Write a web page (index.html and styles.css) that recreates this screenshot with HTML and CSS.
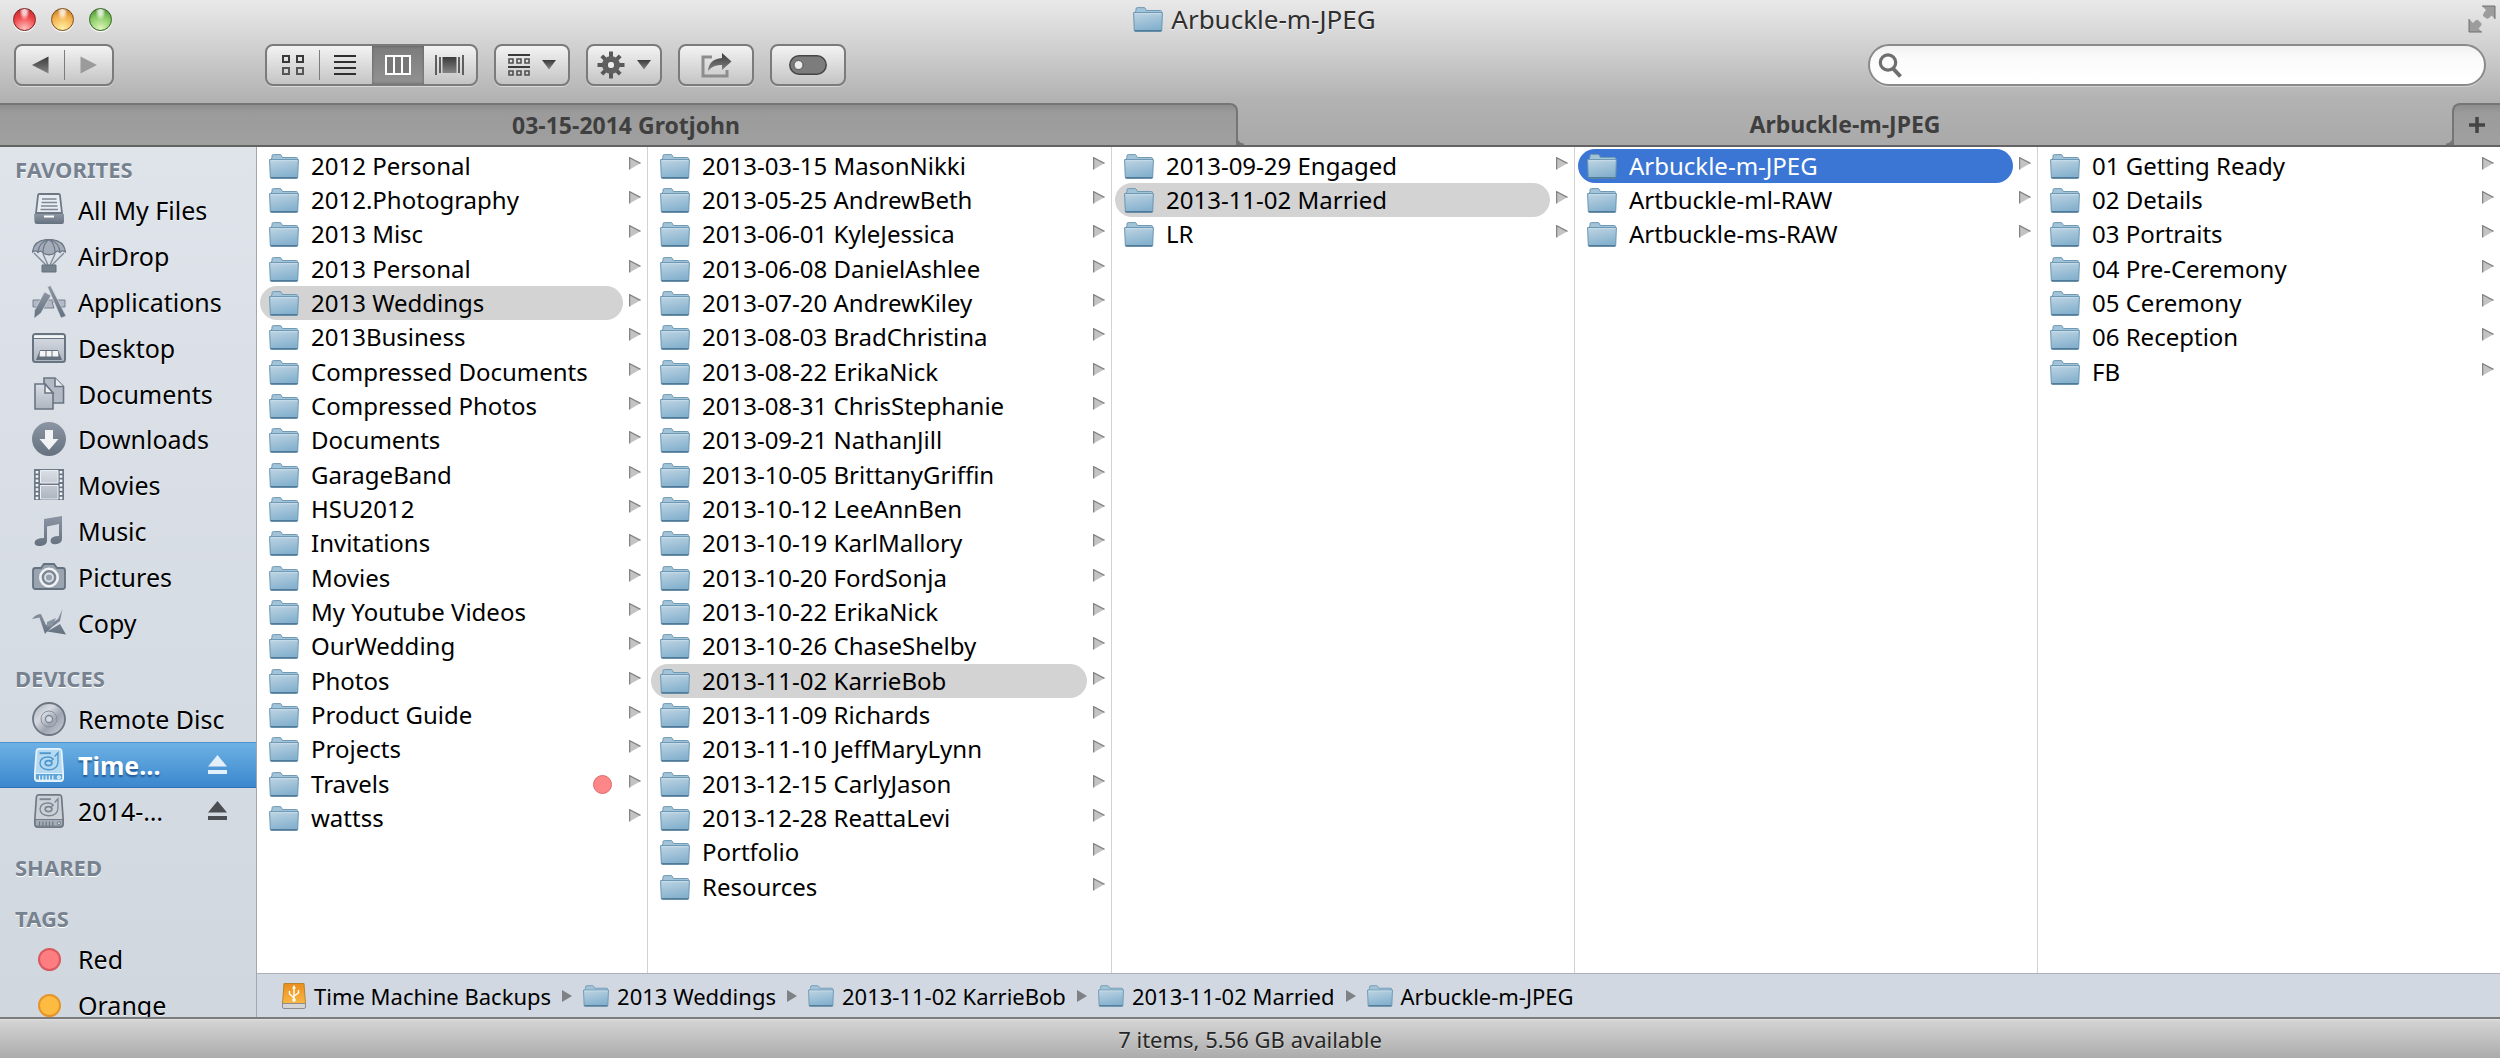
FILE: index.html
```html
<!DOCTYPE html>
<html lang="en">
<head>
<meta charset="utf-8">
<title>Arbuckle-m-JPEG</title>
<link rel="stylesheet" href="styles.css">
</head>
<body>
<svg class="defs" aria-hidden="true">
  <defs>
    <linearGradient id="g-folder" x1="0" y1="0" x2=".3" y2="1"><stop offset="0" stop-color="#bfd5e3"/><stop offset="1" stop-color="#85b1ce"/></linearGradient>
    <linearGradient id="g-side" x1="0" y1="0" x2="0" y2="1"><stop offset="0" stop-color="#8b95a3"/><stop offset="1" stop-color="#667180"/></linearGradient>
    <linearGradient id="g-pale" x1="0" y1="0" x2="0" y2="1"><stop offset="0" stop-color="#dadee5"/><stop offset="1" stop-color="#adb5c0"/></linearGradient>
    <linearGradient id="g-disc" x1="0" y1="0" x2="1" y2="1"><stop offset="0" stop-color="#a9b0bb"/><stop offset=".35" stop-color="#d6dae0"/><stop offset=".6" stop-color="#9ea6b2"/><stop offset="1" stop-color="#ced3da"/></linearGradient>
    <linearGradient id="g-tool" x1="0" y1="0" x2="0" y2="1"><stop offset="0" stop-color="#3a3a3a"/><stop offset="1" stop-color="#848484"/></linearGradient>
    <linearGradient id="g-usb" x1="0" y1="0" x2="0" y2="1"><stop offset="0" stop-color="#e98e1c"/><stop offset="1" stop-color="#fbb845"/></linearGradient>
    <symbol id="folder" viewBox="0 0 30 25">
      <path d="M1.5 8V5.5L3 4V2Q3 .6 4.400 .6H11Q12 .6 12.500 1.600L13.300 3.500H27.500Q28.500 3.500 28.500 4.500V8Z" fill="#a3c3d8" stroke="#6f9ab6" stroke-width="1"/>
      <path d="M.6 5.600H29.400L28.700 23.300Q28.600 24.300 27.600 24.300H2.400Q1.400 24.300 1.300 23.300Z" fill="url(#g-folder)" stroke="#6895b2" stroke-width="1"/>
      <path d="M1.500 23.800H28.500" stroke="#456f8c" stroke-width="1.200"/>
      <path d="M1.500 6.700H28.500" stroke="#d0e2ed" stroke-width=".8"/>
    </symbol>
    <symbol id="chev" viewBox="0 0 12 13"><path d="M.6 .6V12.400L11.500 6.300Z" fill="#c3c3c3"/><path d="M.6 12.600V.7L11.500 6.300" fill="none" stroke="#848484" stroke-width="1.300"/></symbol>
    <symbol id="crumb" viewBox="0 0 10 12"><path d="M0 0L10 6L0 12Z" fill="#7e8287"/></symbol>
    <symbol id="eject" viewBox="0 0 19 20"><path d="M9.500 0L19 11.500H0ZM0 15H19V19H0Z" fill="currentColor"/></symbol>
    <symbol id="hdd" viewBox="0 0 32 36">
      <path d="M5 1H27Q29 1 29.300 3L31 27V32Q31 35 28 35H4Q1 35 1 32V27L2.700 3Q3 1 5 1Z" fill="var(--a)" stroke="var(--b)" stroke-width="1.800"/>
      <path d="M1.500 27H30.500V32Q30.500 34 28 34H4Q1.500 34 1.500 32Z" fill="var(--c)" stroke="var(--b)" stroke-width="1"/>
      <path d="M6 5.500H18" stroke="var(--d)" stroke-width="2"/>
      <path d="M22 9L25.500 5V15Q25 23 15.500 23Q6.500 22.500 6.500 16Q7 9.500 15 9.500Q19 9.500 20.500 12L17 14.500" fill="none" stroke="var(--d)" stroke-width="1.400"/>
      <ellipse cx="15.500" cy="16" rx="3.600" ry="2.700" fill="none" stroke="var(--d)" stroke-width="1.800"/>
      <path d="M6 29V34M9.500 29V34M13 29V34M16.500 29V34M20 29V34" stroke="var(--b)" stroke-width="1.300"/>
      <circle cx="26.500" cy="31" r="1.700" fill="var(--a)" stroke="var(--b)"/>
    </symbol>
  </defs>
</svg>

<div class="window">
  <header class="chrome">
    <div class="titlebar">
      <div class="lights">
        <button class="light red" aria-label="Close"></button>
        <button class="light amber" aria-label="Minimize"></button>
        <button class="light green" aria-label="Zoom"></button>
      </div>
      <h1 class="title"><svg class="folder"><use href="#folder"/></svg>Arbuckle-m-JPEG</h1>
      <button class="full" aria-label="Full screen">
        <svg width="28" height="28" viewBox="0 0 28 28"><path d="M14 1H27V14L23.500 10.500Q20 14.500 18.500 13.500L15 11Q14.500 9 18 5Z M1 14V27H14L10.500 23.500Q14 20 13.500 18.500L10 15Q8.500 14 5 18Z" fill="#9c9c9c"/><path d="M14 1H27M1 14V27M27 1V14M1 27H14" stroke="#707070" stroke-width="1"/></svg>
      </button>
    </div>
    <div class="toolbar">
      <div class="group nav">
        <button aria-label="Back"><svg width="17" height="18" viewBox="0 0 17 18"><path d="M0 9L16.500 .5V17.500Z" fill="url(#g-tool)"/></svg></button>
        <button aria-label="Forward"><svg width="17" height="18" viewBox="0 0 17 18"><path d="M17 9L.5 .5V17.500Z" fill="#9b9b9b"/></svg></button>
      </div>
      <div class="group views">
        <button aria-label="Icons"><svg width="22" height="20" viewBox="0 0 22 20" fill="none" stroke="#3a3a3a" stroke-width="2"><path d="M1 1H7V7H1ZM15 1H21V7H15Z"/><path d="M1 13H7V19H1ZM15 13H21V19H15Z" stroke="#565656"/></svg></button>
        <button aria-label="List"><svg width="22" height="20" viewBox="0 0 22 20"><path d="M0 1H22M0 7H22M0 13H22M0 19H22" stroke="#2e2e2e" stroke-width="2"/></svg></button>
        <button class="on" aria-label="Columns" aria-pressed="true"><svg width="26" height="20" viewBox="0 0 26 20"><path d="M1 1H25V19H1ZM9 1V19M17 1V19" fill="#777" stroke="#fff" stroke-width="2"/></svg></button>
        <button aria-label="Cover Flow"><svg width="29" height="20" viewBox="0 0 29 20"><path d="M1 0V20M5 2V18M24 2V18M28 0V20" stroke="#3f3f3f" stroke-width="1.600"/><path d="M7.500 2H21.500V18H7.500Z" fill="url(#g-tool)"/></svg></button>
      </div>
      <button class="tool" aria-label="Arrange">
        <svg width="22" height="22" viewBox="0 0 22 22" fill="none" stroke="#3a3a3a" stroke-width="2"><path d="M0 1H22M0 13H22"/><path d="M1 5H5V9H1ZM9 5H13V9H9ZM17 5H21V9H17ZM1 17H5V21H1ZM9 17H13V21H9ZM17 17H21V21H17Z" stroke="#505050" stroke-width="1.600"/></svg>
        <svg width="14" height="10" viewBox="0 0 14 10"><path d="M0 0H14L7 9.500Z" fill="url(#g-tool)"/></svg>
      </button>
      <button class="tool" aria-label="Action">
        <svg width="28" height="28" viewBox="-14 -14 28 28"><g stroke="#585858" stroke-width="4"><path d="M0 -13.500V13.500M-13.500 0H13.500M-9.200 -9.200L9.200 9.200M-9.200 9.200L9.200 -9.200"/></g><circle r="9" fill="#606060"/><circle r="3.800" fill="#ececec" stroke="#4d4d4d"/></svg>
        <svg width="14" height="10" viewBox="0 0 14 10"><path d="M0 0H14L7 9.500Z" fill="url(#g-tool)"/></svg>
      </button>
      <button class="tool" aria-label="Share">
        <svg width="31" height="26" viewBox="0 0 31 26"><path d="M11 5H2V24H26V18" fill="none" stroke="#8d8d8d" stroke-width="3"/><path d="M7 19Q8 7 21 6V1L30.500 9.500L21 18V13Q12 12.500 7 19Z" fill="url(#g-tool)"/></svg>
      </button>
      <button class="tool" aria-label="Tags">
        <svg width="38" height="20" viewBox="0 0 38 20"><rect x=".8" y=".8" width="36.400" height="18.400" rx="9.200" fill="#7c7c7c" stroke="#454545" stroke-width="1.500"/><circle cx="9.500" cy="10" r="4.500" fill="#ececec" stroke="#555" stroke-width="1"/></svg>
      </button>
      <label class="search">
        <svg width="25" height="25" viewBox="0 0 25 25"><circle cx="10" cy="9.500" r="7.700" fill="none" stroke="#6e6e6e" stroke-width="3.200"/><path d="M15 15.500L22.500 23.500" stroke="#6e6e6e" stroke-width="4"/></svg>
        <input type="search" aria-label="Search">
      </label>
    </div>
    <nav class="tabs">
      <button class="tab back">03-15-2014 Grotjohn</button>
      <button class="tab">Arbuckle-m-JPEG</button>
      <button class="tab-new" aria-label="New tab"><svg width="16" height="16" viewBox="0 0 16 16"><path d="M8 0V16M0 8H16" stroke="#444" stroke-width="3.500"/></svg></button>
    </nav>
  </header>

  <div class="body">
    <aside class="sidebar">
      <section>
        <h2>FAVORITES</h2>
        <ul>
          <li><a href="#"><svg viewBox="0 0 34 34"><path d="M6 2.500Q6 1 7.500 1H26.500Q28 1 28 2.500L30 20H4Z" fill="#e9ecf0" stroke="#6d7886" stroke-width="1.800"/><path d="M10 6H24.500M9.500 9.500H25M9 13H25.500M8.500 16.500H26" stroke="#7d8795" stroke-width="1.400"/><path d="M2 21H32V28.500Q32 31 30 31H5Q2.500 31 2.500 28.500Z" fill="url(#g-side)"/><path d="M12 23.500H22" stroke="#fff" stroke-width="2"/></svg>All My Files</a></li>
          <li><a href="#"><svg viewBox="0 0 34 34"><path d="M.5 13Q2 .5 17 .5T33.500 13Q30 10.500 28 13.500Q25 10.500 23 14Q17 17.500 11 14Q9 10.500 6 13.500Q4 10.500 .5 13Z" fill="#a4adb9" stroke="#6d7886" stroke-width="1.300"/><path d="M11 14Q11 4 17 .5Q23 4 23 14M6 13Q7 4 15 1M28 13Q27 4 19 1" fill="none" stroke="#6d7886" stroke-width="1.300"/><path d="M2 14L14 26M11 15L16 26M23 15L18 26M32 14L20 26" stroke="#7b8593" stroke-width="1.300"/><path d="M10 26H24V33H10Z" fill="#77828f" stroke="#66717f"/></svg>AirDrop</a></li>
          <li><a href="#"><svg viewBox="0 0 34 34"><path d="M1 15H33V22H29L25 17H20L22 23H11L12 17L5 22H1Z" fill="#b3bac5" stroke="#74808d" stroke-width="1"/><path d="M12.500 7L19 10.500L9 28L2 33.500L2.500 25.500Z" fill="url(#g-side)" stroke="#dde2e8" stroke-width=".6"/><path d="M15.500 2L18.500 .5L34 31L29 33Z" fill="url(#g-side)" stroke="#dde2e8" stroke-width=".6"/></svg>Applications</a></li>
          <li><a href="#"><svg viewBox="0 0 34 34"><rect x="1" y="3" width="32" height="28" rx="2.500" fill="url(#g-pale)" stroke="#697482" stroke-width="2"/><path d="M2 4.500H32V7H2Z" fill="#f2f4f6"/><path d="M2 7.500H32" stroke="#697482"/><path d="M8 19H26L30 29H4Z" fill="#66717f"/><path d="M8 20H13.500V25.500H7.500ZM14.500 20H19.500V25.500H14.500ZM20.500 20H26L26.500 25.500H20.500Z" fill="#f4f5f7"/></svg>Desktop</a></li>
          <li><a href="#"><svg viewBox="0 0 34 34"><path d="M12 1H23L31.500 9.500V26H12Z" fill="#b3bac5" stroke="#697482" stroke-width="1.600"/><path d="M23 1V9.500H31.500" fill="#e8ebef" stroke="#697482" stroke-width="1.600"/><path d="M3 7H13L21 16V32H3Z" fill="url(#g-pale)" stroke="#697482" stroke-width="1.600"/><path d="M13 7V16H21Z" fill="#eff1f4" stroke="#697482" stroke-width="1.500"/></svg>Documents</a></li>
          <li><a href="#"><svg viewBox="0 0 34 34"><circle cx="17" cy="17" r="17" fill="url(#g-side)"/><path d="M13 8H21V17H26.500L17 28L7.500 17H13Z" fill="#f0f2f4"/></svg>Downloads</a></li>
          <li><a href="#"><svg viewBox="0 0 34 34"><path d="M2 1H32V32H2Z" fill="#6d7886"/><path d="M8.500 2.500H26V15H8.500ZM8.500 17.500H26V31H8.500Z" fill="url(#g-pale)" stroke="#eef0f3"/><path d="M5 3V32M29 3V32" stroke="#f2f4f6" stroke-width="2.600" stroke-dasharray="2.500 1.800"/></svg>Movies</a></li>
          <li><a href="#"><svg viewBox="0 0 34 34"><path d="M12 5L30 2V25Q30 29 25 30Q19 31 18.500 27Q18.500 22 27 22V10L15 12.500V27Q15 31 9 32Q2.500 32.500 2.500 28.500Q3 24 12 24Z" fill="url(#g-side)"/></svg>Music</a></li>
          <li><a href="#"><svg viewBox="0 0 34 34"><path d="M3.500 8H9L12 4H22L25 8H30.500Q33 8 33 10.500V26.500Q33 29 30.500 29H3.500Q1 29 1 26.500V10.500Q1 8 3.500 8Z" fill="#9aa4b0" stroke="#66717f" stroke-width="1.800"/><circle cx="17" cy="17.500" r="8.700" fill="#7c8795" stroke="#f0f2f4" stroke-width="2.600"/><circle cx="17" cy="17.500" r="4" fill="#99a3af" stroke="#dfe3e8" stroke-width="1.800"/></svg>Pictures</a></li>
          <li><a href="#"><svg viewBox="0 0 34 34"><path d="M0 13Q4 8 9 8L14 19L20 17L26 13L30.500 3L28 15L20 21L16 25L28 18L34 28.500L15 25.500L13 28L7.500 11.500Z" fill="url(#g-side)"/><path d="M15 16L24 12L20 20L15 21Z" fill="#8994a1"/></svg>Copy</a></li>
        </ul>
      </section>
      <section>
        <h2>DEVICES</h2>
        <ul>
          <li><a href="#"><svg viewBox="0 0 34 34"><circle cx="17" cy="17" r="16" fill="url(#g-disc)" stroke="#6b7683" stroke-width="1.800"/><circle cx="17" cy="17" r="8" fill="none" stroke="#88929f"/><circle cx="17" cy="17" r="3.500" fill="#d6dbe2" stroke="#7d8794" stroke-width="1.300"/></svg>Remote Disc</a></li>
          <li class="current"><a href="#"><svg class="drive lit"><use href="#hdd"/></svg>Time…</a><button class="eject" aria-label="Eject"><svg width="19" height="20"><use href="#eject"/></svg></button></li>
          <li><a href="#"><svg class="drive"><use href="#hdd"/></svg>2014-…</a><button class="eject" aria-label="Eject"><svg width="19" height="20"><use href="#eject"/></svg></button></li>
        </ul>
      </section>
      <section><h2>SHARED</h2></section>
      <section>
        <h2>TAGS</h2>
        <ul>
          <li><a href="#"><i class="dot r"></i>Red</a></li>
          <li><a href="#"><i class="dot o"></i>Orange</a></li>
        </ul>
      </section>
    </aside>

    <main class="main">
      <div class="columns">
        <ul class="col">
          <li><a href="#"><svg class="folder"><use href="#folder"/></svg>2012 Personal</a><svg class="chev"><use href="#chev"/></svg></li>
          <li><a href="#"><svg class="folder"><use href="#folder"/></svg>2012.Photography</a><svg class="chev"><use href="#chev"/></svg></li>
          <li><a href="#"><svg class="folder"><use href="#folder"/></svg>2013 Misc</a><svg class="chev"><use href="#chev"/></svg></li>
          <li><a href="#"><svg class="folder"><use href="#folder"/></svg>2013 Personal</a><svg class="chev"><use href="#chev"/></svg></li>
          <li><a class="open" href="#"><svg class="folder"><use href="#folder"/></svg>2013 Weddings</a><svg class="chev"><use href="#chev"/></svg></li>
          <li><a href="#"><svg class="folder"><use href="#folder"/></svg>2013Business</a><svg class="chev"><use href="#chev"/></svg></li>
          <li><a href="#"><svg class="folder"><use href="#folder"/></svg>Compressed Documents</a><svg class="chev"><use href="#chev"/></svg></li>
          <li><a href="#"><svg class="folder"><use href="#folder"/></svg>Compressed Photos</a><svg class="chev"><use href="#chev"/></svg></li>
          <li><a href="#"><svg class="folder"><use href="#folder"/></svg>Documents</a><svg class="chev"><use href="#chev"/></svg></li>
          <li><a href="#"><svg class="folder"><use href="#folder"/></svg>GarageBand</a><svg class="chev"><use href="#chev"/></svg></li>
          <li><a href="#"><svg class="folder"><use href="#folder"/></svg>HSU2012</a><svg class="chev"><use href="#chev"/></svg></li>
          <li><a href="#"><svg class="folder"><use href="#folder"/></svg>Invitations</a><svg class="chev"><use href="#chev"/></svg></li>
          <li><a href="#"><svg class="folder"><use href="#folder"/></svg>Movies</a><svg class="chev"><use href="#chev"/></svg></li>
          <li><a href="#"><svg class="folder"><use href="#folder"/></svg>My Youtube Videos</a><svg class="chev"><use href="#chev"/></svg></li>
          <li><a href="#"><svg class="folder"><use href="#folder"/></svg>OurWedding</a><svg class="chev"><use href="#chev"/></svg></li>
          <li><a href="#"><svg class="folder"><use href="#folder"/></svg>Photos</a><svg class="chev"><use href="#chev"/></svg></li>
          <li><a href="#"><svg class="folder"><use href="#folder"/></svg>Product Guide</a><svg class="chev"><use href="#chev"/></svg></li>
          <li><a href="#"><svg class="folder"><use href="#folder"/></svg>Projects</a><svg class="chev"><use href="#chev"/></svg></li>
          <li><a href="#"><svg class="folder"><use href="#folder"/></svg>Travels<i class="mark"></i></a><svg class="chev"><use href="#chev"/></svg></li>
          <li><a href="#"><svg class="folder"><use href="#folder"/></svg>wattss</a><svg class="chev"><use href="#chev"/></svg></li>
        </ul>
        <ul class="col">
          <li><a href="#"><svg class="folder"><use href="#folder"/></svg>2013-03-15 MasonNikki</a><svg class="chev"><use href="#chev"/></svg></li>
          <li><a href="#"><svg class="folder"><use href="#folder"/></svg>2013-05-25 AndrewBeth</a><svg class="chev"><use href="#chev"/></svg></li>
          <li><a href="#"><svg class="folder"><use href="#folder"/></svg>2013-06-01 KyleJessica</a><svg class="chev"><use href="#chev"/></svg></li>
          <li><a href="#"><svg class="folder"><use href="#folder"/></svg>2013-06-08 DanielAshlee</a><svg class="chev"><use href="#chev"/></svg></li>
          <li><a href="#"><svg class="folder"><use href="#folder"/></svg>2013-07-20 AndrewKiley</a><svg class="chev"><use href="#chev"/></svg></li>
          <li><a href="#"><svg class="folder"><use href="#folder"/></svg>2013-08-03 BradChristina</a><svg class="chev"><use href="#chev"/></svg></li>
          <li><a href="#"><svg class="folder"><use href="#folder"/></svg>2013-08-22 ErikaNick</a><svg class="chev"><use href="#chev"/></svg></li>
          <li><a href="#"><svg class="folder"><use href="#folder"/></svg>2013-08-31 ChrisStephanie</a><svg class="chev"><use href="#chev"/></svg></li>
          <li><a href="#"><svg class="folder"><use href="#folder"/></svg>2013-09-21 NathanJill</a><svg class="chev"><use href="#chev"/></svg></li>
          <li><a href="#"><svg class="folder"><use href="#folder"/></svg>2013-10-05 BrittanyGriffin</a><svg class="chev"><use href="#chev"/></svg></li>
          <li><a href="#"><svg class="folder"><use href="#folder"/></svg>2013-10-12 LeeAnnBen</a><svg class="chev"><use href="#chev"/></svg></li>
          <li><a href="#"><svg class="folder"><use href="#folder"/></svg>2013-10-19 KarlMallory</a><svg class="chev"><use href="#chev"/></svg></li>
          <li><a href="#"><svg class="folder"><use href="#folder"/></svg>2013-10-20 FordSonja</a><svg class="chev"><use href="#chev"/></svg></li>
          <li><a href="#"><svg class="folder"><use href="#folder"/></svg>2013-10-22 ErikaNick</a><svg class="chev"><use href="#chev"/></svg></li>
          <li><a href="#"><svg class="folder"><use href="#folder"/></svg>2013-10-26 ChaseShelby</a><svg class="chev"><use href="#chev"/></svg></li>
          <li><a class="open" href="#"><svg class="folder"><use href="#folder"/></svg>2013-11-02 KarrieBob</a><svg class="chev"><use href="#chev"/></svg></li>
          <li><a href="#"><svg class="folder"><use href="#folder"/></svg>2013-11-09 Richards</a><svg class="chev"><use href="#chev"/></svg></li>
          <li><a href="#"><svg class="folder"><use href="#folder"/></svg>2013-11-10 JeffMaryLynn</a><svg class="chev"><use href="#chev"/></svg></li>
          <li><a href="#"><svg class="folder"><use href="#folder"/></svg>2013-12-15 CarlyJason</a><svg class="chev"><use href="#chev"/></svg></li>
          <li><a href="#"><svg class="folder"><use href="#folder"/></svg>2013-12-28 ReattaLevi</a><svg class="chev"><use href="#chev"/></svg></li>
          <li><a href="#"><svg class="folder"><use href="#folder"/></svg>Portfolio</a><svg class="chev"><use href="#chev"/></svg></li>
          <li><a href="#"><svg class="folder"><use href="#folder"/></svg>Resources</a><svg class="chev"><use href="#chev"/></svg></li>
        </ul>
        <ul class="col">
          <li><a href="#"><svg class="folder"><use href="#folder"/></svg>2013-09-29 Engaged</a><svg class="chev"><use href="#chev"/></svg></li>
          <li><a class="open" href="#"><svg class="folder"><use href="#folder"/></svg>2013-11-02 Married</a><svg class="chev"><use href="#chev"/></svg></li>
          <li><a href="#"><svg class="folder"><use href="#folder"/></svg>LR</a><svg class="chev"><use href="#chev"/></svg></li>
        </ul>
        <ul class="col">
          <li><a class="open active" href="#"><svg class="folder"><use href="#folder"/></svg>Arbuckle-m-JPEG</a><svg class="chev"><use href="#chev"/></svg></li>
          <li><a href="#"><svg class="folder"><use href="#folder"/></svg>Artbuckle-ml-RAW</a><svg class="chev"><use href="#chev"/></svg></li>
          <li><a href="#"><svg class="folder"><use href="#folder"/></svg>Artbuckle-ms-RAW</a><svg class="chev"><use href="#chev"/></svg></li>
        </ul>
        <ul class="col">
          <li><a href="#"><svg class="folder"><use href="#folder"/></svg>01 Getting Ready</a><svg class="chev"><use href="#chev"/></svg></li>
          <li><a href="#"><svg class="folder"><use href="#folder"/></svg>02 Details</a><svg class="chev"><use href="#chev"/></svg></li>
          <li><a href="#"><svg class="folder"><use href="#folder"/></svg>03 Portraits</a><svg class="chev"><use href="#chev"/></svg></li>
          <li><a href="#"><svg class="folder"><use href="#folder"/></svg>04 Pre-Ceremony</a><svg class="chev"><use href="#chev"/></svg></li>
          <li><a href="#"><svg class="folder"><use href="#folder"/></svg>05 Ceremony</a><svg class="chev"><use href="#chev"/></svg></li>
          <li><a href="#"><svg class="folder"><use href="#folder"/></svg>06 Reception</a><svg class="chev"><use href="#chev"/></svg></li>
          <li><a href="#"><svg class="folder"><use href="#folder"/></svg>FB</a><svg class="chev"><use href="#chev"/></svg></li>
        </ul>
      </div>
      <nav class="path">
        <a href="#"><svg width="24" height="26" viewBox="0 0 24 26"><path d="M2 .5H22L23.500 21H.5Z" fill="url(#g-usb)" stroke="#b8842f"/><path d="M.5 20.500H23.500V24Q23.500 25.500 22 25.500H2Q.5 25.500 .5 24Z" fill="#d5d5d5" stroke="#8d8d8d"/><path d="M12 4V17M12 15L7.500 11V8M12 13L16.500 10V7" fill="none" stroke="#fff" stroke-width="1.400"/><path d="M12 2L14 5.500H10Z" fill="#fff"/><circle cx="12" cy="17" r="1.800" fill="#fff"/></svg>Time Machine Backups</a>
        <svg class="crumb"><use href="#crumb"/></svg>
        <a href="#"><svg class="folder"><use href="#folder"/></svg>2013 Weddings</a>
        <svg class="crumb"><use href="#crumb"/></svg>
        <a href="#"><svg class="folder"><use href="#folder"/></svg>2013-11-02 KarrieBob</a>
        <svg class="crumb"><use href="#crumb"/></svg>
        <a href="#"><svg class="folder"><use href="#folder"/></svg>2013-11-02 Married</a>
        <svg class="crumb"><use href="#crumb"/></svg>
        <a href="#"><svg class="folder"><use href="#folder"/></svg>Arbuckle-m-JPEG</a>
      </nav>
    </main>
  </div>
  <footer class="status">7 items, 5.56 GB available</footer>
</div>
</body>
</html>
```
FILE: styles.css
```css
* { box-sizing: border-box; }
body {
  margin: 0;
  font-family: "Noto Sans", "Open Sans", sans-serif;
  font-size: 24px;
  line-height: 34px;
  color: #000;
}
ul { margin: 0; padding: 0; list-style: none; }
a { color: inherit; text-decoration: none; }
button { margin: 0; padding: 0; border: 0; background: none; font: inherit; color: inherit; }
svg { display: block; flex: none; }
.defs { position: absolute; width: 0; height: 0; }

.window { height: 100vh; display: flex; flex-direction: column; overflow: hidden; }

/* Window chrome */
.chrome {
  flex: none;
  background: linear-gradient(#e9e9e9, #d0d0d0 48px, #b2b2b2 100px, #a9a9a9);
  border-bottom: 2px solid #636363;
}
.titlebar { height: 44px; padding: 0 4px 6px 13px; display: grid; grid-template-columns: 1fr auto 1fr; align-items: center; }
.lights { display: flex; gap: 15px; }
.light { width: 23px; height: 23px; border-radius: 50%; border: 1px solid; box-shadow: 0 1px 1px #fff; }
.red { border-color: #7d2325; background: radial-gradient(ellipse at 50% 12%, #ffffffc0 0 12%, #fff0 34%), radial-gradient(circle at 50% 95%, #ffc4c0, #f0474a 55%, #b02326); }
.amber { border-color: #80501a; background: radial-gradient(ellipse at 50% 12%, #ffffffc0 0 12%, #fff0 34%), radial-gradient(circle at 50% 95%, #fff4a8, #f3ae4a 60%, #a96a20); }
.green { border-color: #356422; background: radial-gradient(ellipse at 50% 12%, #ffffffc0 0 12%, #fff0 34%), radial-gradient(circle at 50% 95%, #e0f8bc, #83c75f 60%, #3f7d2c); }
.title { margin: 0; display: flex; align-items: center; gap: 8px; font-size: 26px; font-weight: 400; color: #2f2f2f; text-shadow: 0 1px #f4f4f4; }
.full { justify-self: end; }
.folder { width: 30px; height: 25px; }

.toolbar { height: 59px; padding: 0 14px; display: flex; align-items: flex-start; gap: 16px; }
.group, .tool {
  height: 42px;
  display: flex;
  border: 2px solid #7b7b7b;
  border-radius: 8px;
  background: linear-gradient(#f3f3f3, #c4c4c4);
  box-shadow: 0 1px #d8d8d8;
  overflow: hidden;
}
.group button { flex: 1; display: flex; align-items: center; justify-content: center; position: relative; }
.nav { width: 100px; margin-right: 135px; }
.views { width: 213px; }
.nav button + button::before, .views button:nth-child(2)::before {
  content: "";
  position: absolute;
  left: 0;
  top: 4px;
  bottom: 4px;
  width: 1px;
  background: #7c7c7c;
}
.views .on { background: linear-gradient(#7c7c7c, #929292); box-shadow: inset 0 0 3px #5a5a5a; }
.tool { width: 76px; align-items: center; justify-content: center; gap: 12px; }
.search {
  width: 25%;
  height: 42px;
  margin-left: auto;
  padding: 0 8px;
  display: flex;
  align-items: center;
  gap: 8px;
  border: 2px solid #8a8a8a;
  border-radius: 21px;
  background: linear-gradient(#f2f2f2, #fbfbfb 12px, #fff);
  box-shadow: 0 1px #d2d2d2;
}
.search input { flex: 1; min-width: 0; border: 0; outline: 0; background: none; font: inherit; }

.tabs { height: 42px; display: flex; font-size: 23px; font-weight: 700; color: #3f3f3f; text-shadow: 0 1px #ccc; }
.tab { flex: 1; }
.back, .tab-new { position: relative; border-top: 2px solid #757575; background: linear-gradient(#8e8e8e, #9b9b9b 8px, #a0a0a0); }
.back { flex: 0 0 auto; width: calc(50% - 12px); padding-left: 16px; border-right: 2px solid #757575; border-radius: 0 8px 0 0; }
.tab-new { width: 48px; display: grid; place-items: center; border-left: 2px solid #757575; border-radius: 8px 0 0 0; }
.back::after, .tab-new::before { content: ""; position: absolute; bottom: 0; width: 8px; height: 8px; }
.back::after { right: -8px; background: radial-gradient(circle at 100% 0, #0000 6px, #757575 7px); }
.tab-new::before { left: -8px; background: radial-gradient(circle at 0 0, #0000 6px, #757575 7px); }

/* Sidebar */
.body { flex: 1; min-height: 0; display: flex; }
.sidebar {
  flex: none;
  width: 257px;
  padding-top: 5px;
  overflow: hidden;
  background: linear-gradient(#dfe3ea, #d0d7df);
  border-right: 1px solid #a4a8ad;
  font-size: 25px;
}
.sidebar h2 { margin: 0; padding-left: 15px; font-size: 22px; line-height: 35px; color: #76828f; text-shadow: 0 1px #fff; }
.sidebar section + section { margin-top: 16px; }
.sidebar li { height: 46px; padding: 0 29px 0 32px; display: flex; align-items: center; }
.sidebar li:nth-child(5n) { height: 45px; }
.sidebar a { flex: 1; display: flex; align-items: center; gap: 12px; white-space: nowrap; text-shadow: 0 1px #eef1f4; }
.sidebar a > svg { width: 34px; height: 34px; }
.sidebar .drive { --a: #ccd1d8; --b: #6f7985; --c: #a4acb7; --d: #7d8793; }
.sidebar .lit { --a: #b5d9f0; --b: #e8f4fb; --c: #5fa5d8; --d: #4f97cd; }
.sidebar .current { background: linear-gradient(#6db2e4, #3b87ce); border-top: 1px solid #4a93cf; border-bottom: 1px solid #2d70b8; color: #fff; font-weight: 700; }
.sidebar .current a { text-shadow: 0 2px 2px #1f568f; }
.eject { color: #4a4d51; }
.current .eject { color: #e3f0fa; }
.dot { width: 23px; height: 23px; margin: 0 5px 0 6px; border: 2px solid; border-radius: 50%; }
.r { background: #fd7d80; border-color: #d85a5e; }
.o { background: #fdbb41; border-color: #e6942a; }

/* Columns */
.main { flex: 1; min-width: 0; display: flex; flex-direction: column; background: #fff; }
.columns { flex: 1; min-height: 0; display: grid; grid-template-columns: 391fr 464fr 463fr 463fr 462fr; }
.col { min-width: 0; padding: 2px 0 0 3px; border-right: 1px solid #d2d2d2; }
.col:last-child { border-right: 0; }
.col li { height: 34px; display: flex; align-items: center; }
.col li:nth-child(3n) { margin-bottom: 1px; }
.col a { flex: 1; min-width: 0; height: 34px; padding: 0 11px 0 9px; display: flex; align-items: center; gap: 12px; border-radius: 17px; line-height: 32px; white-space: nowrap; }
.open { background: #d3d3d3; }
.col .active { background: #3c76d4; color: #fff; }
.chev { width: 12px; height: 13px; margin: 0 6px 5px 6px; }
.mark { width: 19px; height: 19px; margin-left: auto; border: 1px solid #de686b; border-radius: 50%; background: #fd8688; }

/* Path and status bars */
.path { flex: none; height: 44px; padding-left: 25px; display: flex; align-items: center; gap: 11px; border-top: 1px solid #adb0b4; background: #d1d8e1; font-size: 22px; white-space: nowrap; }
.path a { display: flex; align-items: center; gap: 8px; }
.path .folder { width: 26px; height: 22px; }
.crumb { width: 10px; height: 12px; }
.status { flex: none; height: 41px; border-top: 2px solid #7c7c7c; background: linear-gradient(#e2e2e2, #d3d3d3 2px, #acacac); font-size: 22px; line-height: 40px; text-align: center; color: #262626; text-shadow: 0 1px #e0e0e0; }
```
